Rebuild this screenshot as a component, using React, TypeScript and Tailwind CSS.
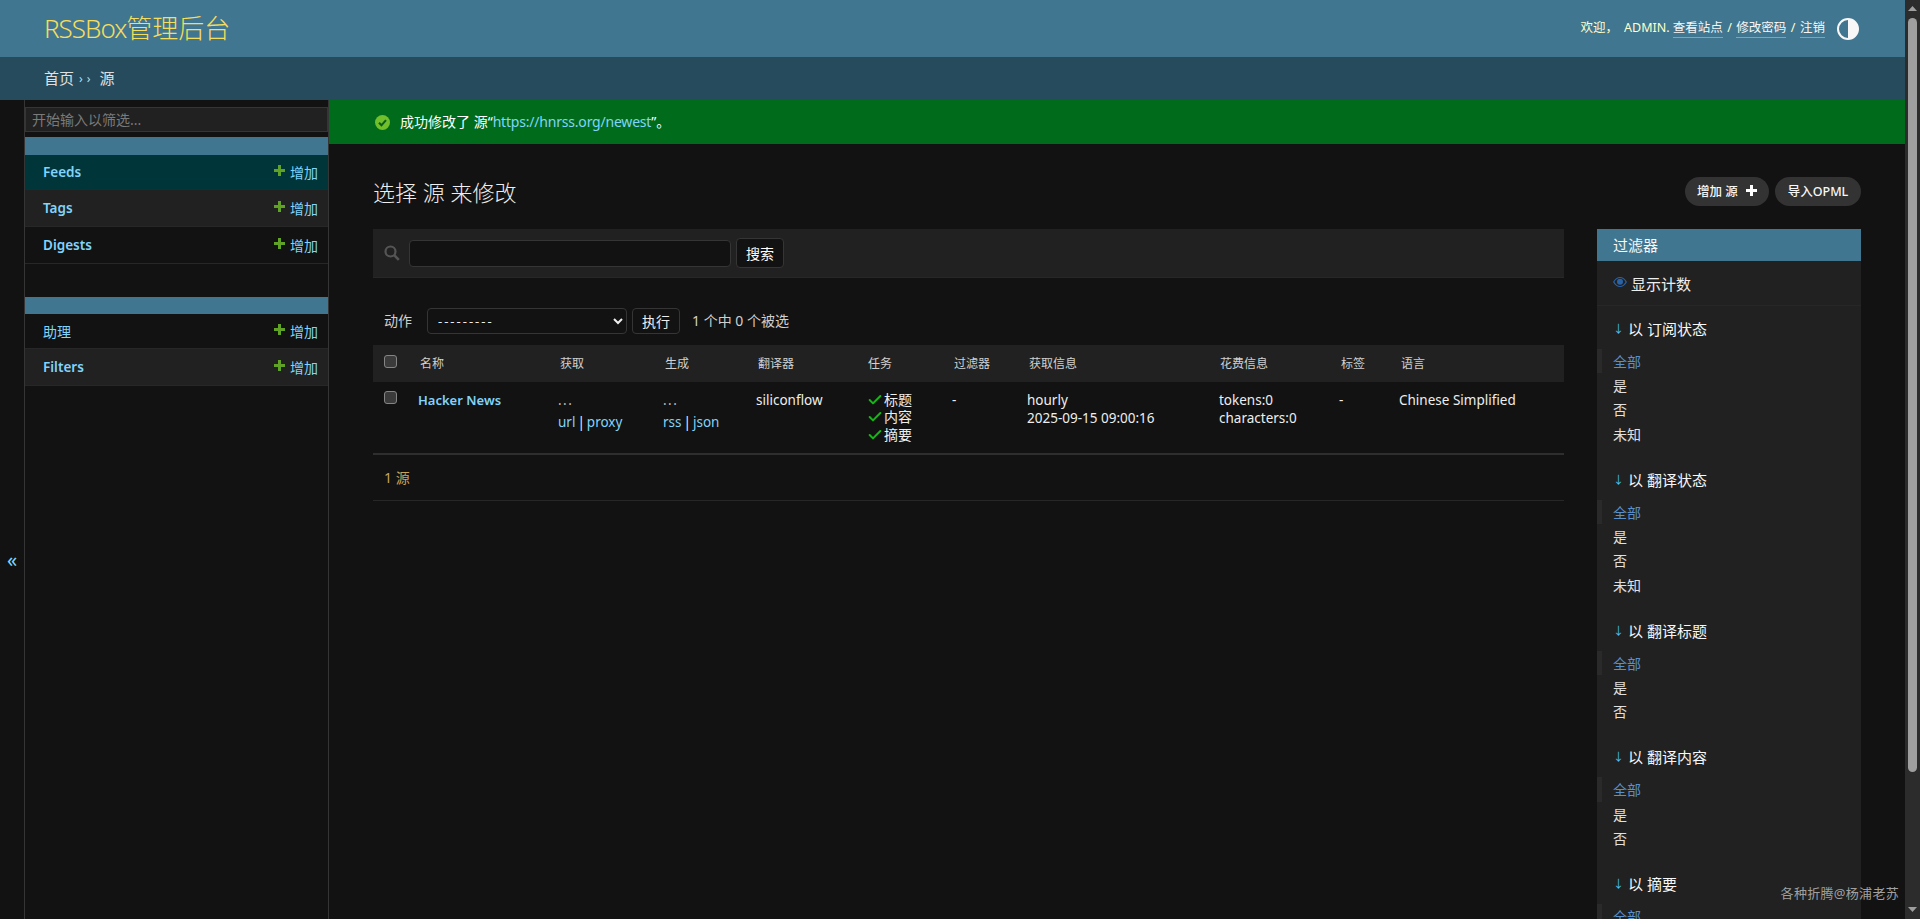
import { Check } from 'lucide-react';

const navGroups = [
  { rows: ['Feeds', 'Tags', 'Digests'] },
  { rows: ['助理', 'Filters'] },
];

const filters = [
  { title: '以 订阅状态', items: ['全部', '是', '否', '未知'] },
  { title: '以 翻译状态', items: ['全部', '是', '否', '未知'] },
  { title: '以 翻译标题', items: ['全部', '是', '否'] },
  { title: '以 翻译内容', items: ['全部', '是', '否'] },
  { title: '以 摘要', items: ['全部', '是', '否'] },
];

const columns = [
  { label: '名称', width: 'w-[140px]', pad: 'pl-[10px]' },
  { label: '获取', width: 'w-[105px]', pad: 'pl-[10px]' },
  { label: '生成', width: 'w-[93px]', pad: 'pl-[10px]' },
  { label: '翻译器', width: 'w-[112px]', pad: 'pl-[10px]' },
  { label: '任务', width: 'w-[84px]', pad: 'pl-[8px]' },
  { label: '过滤器', width: 'w-[75px]', pad: 'pl-[10px]' },
  { label: '获取信息', width: 'w-[192px]', pad: 'pl-[10px]' },
  { label: '花费信息', width: 'w-[120px]', pad: 'pl-[9px]' },
  { label: '标签', width: 'w-[60px]', pad: 'pl-[10px]' },
  { label: '语言', width: 'w-[173px]', pad: 'pl-[10px]' },
];

function GreenPlus() {
  return (
    <svg width="11" height="11" viewBox="0 0 11 11" className="mt-[-4px] shrink-0">
      <path d="M4 0h3v4h4v3H7v4H4V7H0V4h4z" fill="#5fa225" />
    </svg>
  );
}

function Checkbox() {
  return <input type="checkbox" className="block h-[13px] w-[13px] appearance-none rounded-[3px] border border-[#858585] bg-[#3b3b3b]" />;
}

function NavRow({ name, index }: { name: string; index: number }) {
  const selected = name === 'Feeds';
  const tint = selected ? 'bg-[#00363a]' : index % 2 === 1 ? 'bg-[#212121]' : 'bg-[#121212]';
  const height = index === 0 ? 'h-[35px]' : 'h-[37px]';
  const weight = name === '助理' ? 'text-[14px] font-normal' : 'pt-[1px] text-[13.5px] font-semibold';
  return (
    <div className={`${tint} ${height} flex items-center justify-between border-b border-[#272727] pl-[18px] pr-[10px]`}>
      <span className={`${weight} text-[#81d4fa]`}>{name}</span>
      <span className="flex items-center gap-[5px] text-[14px] text-[#81d4fa]">
        <GreenPlus />
        增加
      </span>
    </div>
  );
}

function Sidebar() {
  return (
    <aside className="flex w-[304px] shrink-0 flex-col border-r border-[#353535]">
      <input
        placeholder="开始输入以筛选..."
        className="mt-[7px] h-[25px] w-full border border-[#353535] bg-[#212121] px-[6px] text-[14px] text-[#eeeeee] placeholder:text-[#7a7a7a]"
      />
      <div className="mt-[5px] h-[18px] bg-[#417690]" />
      {navGroups[0].rows.map((r, i) => (
        <NavRow key={r} name={r} index={i} />
      ))}
      <div className="mt-[33px] h-[17px] bg-[#417690]" />
      {navGroups[1].rows.map((r, i) => (
        <NavRow key={r} name={r} index={i} />
      ))}
    </aside>
  );
}

function ResultTable() {
  return (
    <table className="w-full table-fixed border-collapse">
      <thead>
        <tr className="h-[37px] bg-[#212121] text-left text-[12px] font-normal text-[#d0d0d0]">
          <th className="w-[37px] pl-[11px] align-top pt-[10px]">
            <Checkbox />
          </th>
          {columns.map((c) => (
            <th key={c.label} className={`${c.width} ${c.pad} pt-[1px] font-normal`}>
              {c.label}
            </th>
          ))}
        </tr>
      </thead>
      <tbody className="text-[13.5px] leading-[18px] text-[#eeeeee]">
        <tr className="h-[72px] border-b-2 border-[#2e2e2e] align-top">
          <td className="pl-[11px] pt-[9px]">
            <Checkbox />
          </td>
          <td className="pl-[8px] pt-[9px] text-[13px] font-semibold text-[#81d4fa]">Hacker News</td>
          <td className="pl-[8px] pt-[9px]">
            <div className="tracking-[1.5px] text-[#bdbdbd]">...</div>
            <div className="mt-[4px] text-[#81d4fa]">
              url<span className="mx-[2px] text-[#eeeeee]">|</span>proxy
            </div>
          </td>
          <td className="pl-[8px] pt-[9px]">
            <div className="tracking-[1.5px] text-[#bdbdbd]">...</div>
            <div className="mt-[4px] text-[#81d4fa]">
              rss<span className="mx-[2px] text-[#eeeeee]">|</span>json
            </div>
          </td>
          <td className="pl-[8px] pt-[9px]">siliconflow</td>
          <td className="pl-[7px] pt-[9px] text-[14px]">
            {['标题', '内容', '摘要'].map((t) => (
              <div key={t} className="flex h-[17.5px] items-center gap-[1px]">
                <Check size={16} strokeWidth={3} className="text-[#14b814]" />
                {t}
              </div>
            ))}
          </td>
          <td className="pl-[8px] pt-[9px]">-</td>
          <td className="pl-[8px] pt-[9px]">
            <div>hourly</div>
            <div>2025-09-15 09:00:16</div>
          </td>
          <td className="pl-[8px] pt-[9px]">
            <div>tokens:0</div>
            <div>characters:0</div>
          </td>
          <td className="pl-[8px] pt-[9px]">-</td>
          <td className="pl-[8px] pt-[9px]">Chinese Simplified</td>
        </tr>
      </tbody>
    </table>
  );
}

function FilterPanel() {
  return (
    <div className="w-[264px] shrink-0 bg-[#212121]">
      <div className="flex h-[32px] items-center bg-[#417690] pl-[16px] text-[15px] text-[#f7f7f7]">过滤器</div>
      <div className="flex h-[45px] items-center gap-[4px] border-b border-[#272727] pl-[16px] pt-[3px] text-[15px] text-[#eeeeee]">
        <svg width="14" height="12" viewBox="0 0 14 12" className="mt-[-5px]">
          <path d="M.7 6C2.5 2.8 4.6 1.5 7 1.5s4.5 1.3 6.3 4.5c-1.8 3.2-3.9 4.5-6.3 4.5S2.5 9.2.7 6z" fill="none" stroke="#2a62a8" strokeWidth="1.2" />
          <circle cx="7" cy="5.8" r="3" fill="#2a62a8" />
        </svg>
        显示计数
      </div>
      <div className="pt-[11px]">
        {filters.map((f) => (
          <section key={f.title} className="mb-[21.4px]">
            <h3 className="flex h-[24px] items-center pl-[16px] text-[15px] font-normal text-[#f7f7f7]">
              <span className="mr-[4px] text-[11px] text-[#4ac1f7]">↓</span>
              {f.title}
            </h3>
            <ul className="mt-[8px] text-[14px]">
              {f.items.map((item, i) => (
                <li
                  key={item}
                  className={
                    i === 0
                      ? 'flex h-[24.4px] items-center border-l-[5px] border-[#2a2a2a] pl-[11px] text-[#5b8fc9]'
                      : 'flex h-[24.4px] items-center pl-[16px] text-[#e0e0e0]'
                  }
                >
                  {item}
                </li>
              ))}
            </ul>
          </section>
        ))}
      </div>
    </div>
  );
}

export default function App() {
  return (
    <div className="relative flex h-[919px] w-full overflow-hidden bg-[#121212] font-['Noto_Sans','Noto_Sans_CJK_SC',sans-serif] text-[#eeeeee]">
      <div className="flex min-w-0 flex-1 flex-col">
        {/* Header */}
        <header className="flex h-[57px] shrink-0 items-center justify-between bg-[#417690] pl-[44px] pr-[46px]">
          <div className="text-[26px] font-light text-[#f5dd5d]">
            <span className="tracking-[-1px]">RSSBox</span>管理后台
          </div>
          <div className="flex items-center text-[12.5px] text-[#ffffcc]">
            <span>欢迎，</span>
            <span className="ml-[6px] mr-[3px] uppercase">admin.</span>
            <span className="border-b border-[#ffffff55] text-[#f7f7f7]">查看站点</span>
            <span className="mx-[4.5px]">/</span>
            <span className="border-b border-[#ffffff55] text-[#f7f7f7]">修改密码</span>
            <span className="mx-[4.5px]">/</span>
            <span className="border-b border-[#ffffff55] text-[#f7f7f7]">注销</span>
            <svg width="22" height="22" viewBox="0 0 22 22" className="ml-[12px]">
              <circle cx="11" cy="11" r="10" fill="none" stroke="#f7f7f7" strokeWidth="2" />
              <path d="M11 1a10 10 0 0 1 0 20z" fill="#f7f7f7" />
            </svg>
          </div>
        </header>
        <div className="flex h-[43px] shrink-0 items-center bg-[#264b5d] pl-[44px] text-[15px] text-[#e0e0e0]">
          首页<span className="mx-[5px] text-[12px] tracking-[4px] text-[#c4dce8]">››</span>源
        </div>

        <div className="flex min-h-0 flex-1">
          <div className="flex w-[25px] shrink-0 justify-center border-r border-[#353535] pt-[445px] text-[20px] leading-[30px] text-[#81d4fa]">«</div>
          <Sidebar />

          <main className="min-w-0 flex-1">
            <div className="flex h-[44px] items-center gap-[10px] bg-[#006b1b] pl-[46px] text-[14px] text-[#ffffff]">
              <svg width="15" height="15" viewBox="0 0 15 15">
                <circle cx="7.5" cy="7.5" r="7.5" fill="#70bf2b" />
                <path d="M4 7.7 6.5 10.2 11 5.2" fill="none" stroke="#0b5d1c" strokeWidth="2" />
              </svg>
              <span className="mt-[-1px]">
                成功修改了 源“<span className="tracking-[-0.2px] text-[#81d4fa]">https://hnrss.org/newest</span>”。
              </span>
            </div>

            <div className="px-[44px]">
              <div className="mt-[33px] flex h-[29px] items-center justify-between">
                <h1 className="pt-[2px] text-[22px] font-light text-[#eeeeee]">选择 源 来修改</h1>
                <div className="flex gap-[6px] text-[12.5px] font-medium text-[#f7f7f7]">
                  <span className="flex h-[29px] w-[84px] items-center justify-center gap-[8px] rounded-full bg-[#333333] pt-[1px]">
                    增加 源
                    <svg width="11" height="11" viewBox="0 0 11 11" className="mt-[-3px] shrink-0">
                      <path d="M4 0h3v4h4v3H7v4H4V7H0V4h4z" fill="#ffffff" />
                    </svg>
                  </span>
                  <span className="flex h-[29px] w-[86px] items-center justify-center rounded-full bg-[#333333] pt-[1px]">导入OPML</span>
                </div>
              </div>

              <div className="mt-[23px] flex gap-[33px]">
                <div className="min-w-0 flex-1">
                  {/* Search toolbar */}
                  <div className="flex h-[49px] items-center border-b border-[#272727] bg-[#212121] pl-[11px]">
                    <svg width="16" height="16" viewBox="0 0 16 16" className="mr-[9px]">
                      <circle cx="6.5" cy="6.5" r="5" fill="none" stroke="#555555" strokeWidth="2.2" />
                      <path d="m10.2 10.2 4.6 4.6" stroke="#555555" strokeWidth="2.6" />
                    </svg>
                    <input className="h-[27px] w-[322px] rounded-[4px] border border-[#353535] bg-[#121212]" />
                    <button className="ml-[5px] h-[30px] w-[48px] rounded-[4px] border border-[#353535] bg-[#121212] text-[14px] text-[#ffffff]">搜索</button>
                  </div>

                  {/* Actions */}
                  <div className="mt-[30px] flex h-[26px] items-center pl-[11px] text-[14px]">
                    <span className="mb-[2px] mr-[15px] w-[28px] shrink-0 text-[#d0d0d0]">动作</span>
                    <select className="h-[26px] w-[200px] rounded-[4px] border border-[#353535] bg-[#121212] pl-[6px] text-[13px] tracking-[2px] text-[#eeeeee]">
                      <option>---------</option>
                    </select>
                    <button className="ml-[5px] h-[26px] w-[48px] rounded-[4px] border border-[#353535] bg-[#121212] text-[14px] text-[#eeeeee]">执行</button>
                    <span className="mb-[2px] ml-[12px] text-[#d0d0d0]">1 个中 0 个被选</span>
                  </div>

                  <div className="mt-[11px]">
                    <ResultTable />
                  </div>
                  <div className="flex h-[46px] items-center border-b border-[#272727] pl-[11px] text-[14px] text-[#c9a35c]">1 源</div>
                </div>

                <FilterPanel />
              </div>
            </div>
          </main>
        </div>
      </div>

      {/* Browser scrollbar */}
      <div className="flex w-[15px] shrink-0 flex-col items-center bg-[#2c2c2c]">
        <svg width="9" height="5" viewBox="0 0 9 5" className="mt-[6px]">
          <path d="M4.5 0 9 5H0z" fill="#9f9f9f" />
        </svg>
        <div className="mt-[7px] h-[754px] w-[9px] rounded-full bg-[#9f9f9f]" />
        <svg width="9" height="5" viewBox="0 0 9 5" className="mt-[135px]">
          <path d="M0 0h9L4.5 5z" fill="#9f9f9f" />
        </svg>
      </div>

      {/* Image watermark */}
      <div className="absolute right-[21px] top-[883px] text-[13px] leading-[20px] tracking-[0.3px] text-[#a0a0a0]">各种折腾@杨浦老苏</div>
    </div>
  );
}
